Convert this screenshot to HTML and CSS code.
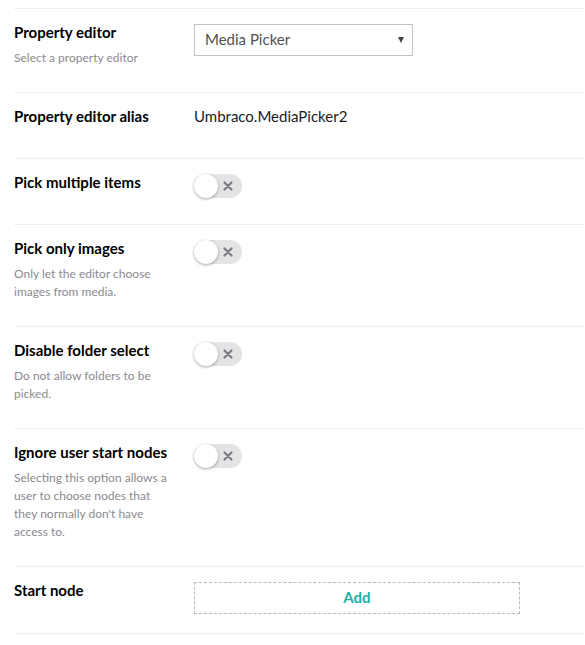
FILE: index.html
```html
<!DOCTYPE html>
<html>
<head>
<meta charset="utf-8">
<link rel="stylesheet" href="styles.css">
</head>
<body>
<div class="editor">
  <div class="row">
    <div class="label-col">
      <div class="label">Property editor</div>
      <div class="desc">Select a property editor</div>
    </div>
    <div class="control">
      <div class="select"><span>Media Picker</span><span class="caret"></span></div>
    </div>
  </div>
  <div class="row">
    <div class="label-col">
      <div class="label">Property editor alias</div>
    </div>
    <div class="control">
      <div class="value">Umbraco.MediaPicker2</div>
    </div>
  </div>
  <div class="row">
    <div class="label-col">
      <div class="label">Pick multiple items</div>
    </div>
    <div class="control">
      <div class="toggle"><span class="knob"></span><svg class="x" width="10" height="10" viewBox="0 0 10 10"><path d="M1.5 1.5 L8.5 8.5 M8.5 1.5 L1.5 8.5" stroke="#7b7b80" stroke-width="2.2" stroke-linecap="round"/></svg></div>
    </div>
  </div>
  <div class="row">
    <div class="label-col">
      <div class="label">Pick only images</div>
      <div class="desc">Only let the editor choose images from media.</div>
    </div>
    <div class="control">
      <div class="toggle"><span class="knob"></span><svg class="x" width="10" height="10" viewBox="0 0 10 10"><path d="M1.5 1.5 L8.5 8.5 M8.5 1.5 L1.5 8.5" stroke="#7b7b80" stroke-width="2.2" stroke-linecap="round"/></svg></div>
    </div>
  </div>
  <div class="row">
    <div class="label-col">
      <div class="label">Disable folder select</div>
      <div class="desc">Do not allow folders to be picked.</div>
    </div>
    <div class="control">
      <div class="toggle"><span class="knob"></span><svg class="x" width="10" height="10" viewBox="0 0 10 10"><path d="M1.5 1.5 L8.5 8.5 M8.5 1.5 L1.5 8.5" stroke="#7b7b80" stroke-width="2.2" stroke-linecap="round"/></svg></div>
    </div>
  </div>
  <div class="row">
    <div class="label-col">
      <div class="label">Ignore user start nodes</div>
      <div class="desc">Selecting this option allows a user to choose nodes that they normally don't have access to.</div>
    </div>
    <div class="control">
      <div class="toggle"><span class="knob"></span><svg class="x" width="10" height="10" viewBox="0 0 10 10"><path d="M1.5 1.5 L8.5 8.5 M8.5 1.5 L1.5 8.5" stroke="#7b7b80" stroke-width="2.2" stroke-linecap="round"/></svg></div>
    </div>
  </div>
  <div class="row row-last">
    <div class="label-col">
      <div class="label">Start node</div>
    </div>
    <div class="control">
      <div class="add">Add</div>
    </div>
  </div>
</div>
</body>
</html>
```
FILE: styles.css
```css
html, body {
  margin: 0;
  padding: 0;
  background: #fff;
}
body {
  font-family: Lato, "Open Sans", sans-serif;
  color: #000;
}
.editor {
  padding: 8px 1px 0 14px;
}
.row {
  display: flex;
  border-top: 1px solid #eeeef0;
  padding: 15px 0 25px;
}
.row-last {
  padding-bottom: 19px;
  border-bottom: 1px solid #eeeef0;
}
.label-col {
  width: 160px;
  margin-right: 20px;
  flex-shrink: 0;
}
.label {
  font-size: 15px;
  font-weight: 700;
  line-height: 16px;
  color: #000;
}
.desc {
  margin-top: 9px;
  font-size: 12px;
  line-height: 18px;
  color: #8a8a8f;
}
.control {
  min-height: 25px;
  flex: 1;
}
.select {
  height: 30px;
  border: 1px solid #c3c3c6;
  display: flex;
  align-items: center;
  justify-content: space-between;
  padding: 0 8px 2px 10px;
  box-sizing: content-box;
  height: 28px;
  width: 199px;
  font-size: 15px;
  color: #515154;
}
.caret {
  width: 0;
  height: 0;
  border-left: 3.5px solid transparent;
  border-right: 3.5px solid transparent;
  border-top: 6px solid #444;
  margin-top: 2px;
}
.value {
  font-size: 15px;
  line-height: 16px;
  color: #1b1b1d;
}
.toggle {
  width: 48px;
  height: 24px;
  border-radius: 12px;
  background: #e4e4e6;
  position: relative;
}
.knob {
  position: absolute;
  left: 0;
  top: 0;
  width: 24px;
  height: 24px;
  border-radius: 50%;
  background: #fff;
  box-shadow: 0 1px 3px rgba(0,0,0,0.35);
}
.x {
  position: absolute;
  left: 29px;
  top: 7px;
}
.add {
  width: 324px;
  height: 28px;
  padding-bottom: 2px;
  border: 1px dashed #b9b9bc;
  display: flex;
  align-items: center;
  justify-content: center;
  font-size: 15px;
  font-weight: 700;
  color: #1eb0a2;
}
```
